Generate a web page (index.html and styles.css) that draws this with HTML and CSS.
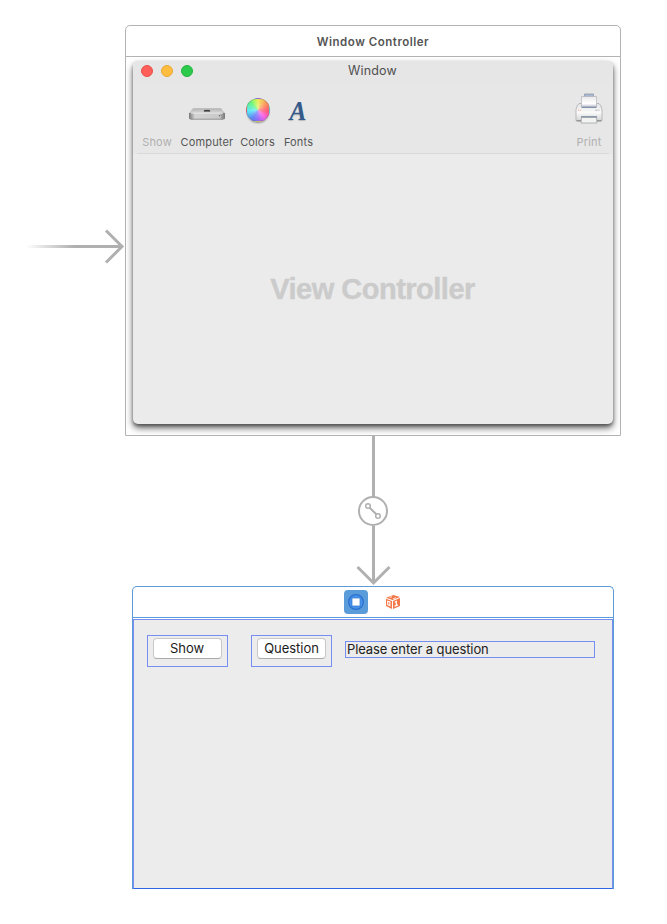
FILE: index.html
```html
<!DOCTYPE html>
<html lang="en">
<head>
<meta charset="utf-8">
<title>Storyboard</title>
<link rel="stylesheet" href="styles.css">
</head>
<body>
<main class="canvas">
  <svg class="entry" width="100" height="36" viewBox="0 0 100 36">
    <defs><linearGradient id="fade"><stop offset="0" stop-color="#b0b0b0" stop-opacity="0"/><stop offset=".5" stop-color="#b0b0b0"/></linearGradient></defs>
    <rect x="1" y="17" width="96" height="3" fill="url(#fade)"/>
    <path d="M81 2.5 97 18.5 81 34.5" fill="none" stroke="#b0b0b0" stroke-width="3"/>
  </svg>

  <section class="controller">
    <header class="controller-title"><span>Window Controller</span></header>
    <div class="window">
      <div class="titlebar">
        <div class="lights"><i class="light red"></i><i class="light yellow"></i><i class="light green"></i></div>
        <span class="window-title">Window</span>
      </div>
      <div class="toolbar">
        <div class="tool show dim"><span>Show</span></div>
        <div class="tool computer">
          <svg width="38" height="16" viewBox="0 0 38 16">
            <defs>
              <linearGradient id="top" x2="0" y2="1"><stop stop-color="#b4b4b4"/><stop offset="1" stop-color="#dadada"/></linearGradient>
              <linearGradient id="front"><stop stop-color="#777"/><stop offset=".09" stop-color="#aaa"/><stop offset=".16" stop-color="#d4d4d4"/><stop offset=".85" stop-color="#c8c8c8"/><stop offset=".92" stop-color="#999"/><stop offset="1" stop-color="#777"/></linearGradient>
            </defs>
            <path d="M5 2.500h28l3.500 5H1.500z" fill="url(#top)" stroke="#b0b0b0" stroke-width=".5"/>
            <path d="M1 7.500q0-.7 1-.7h34q1 0 1 .7v4.500q0 1.500-2 1.500H3q-2 0-2-1.500z" fill="url(#front)"/>
            <path d="M3 7.200h32" stroke="#eee" stroke-width=".8"/>
            <path d="M3 13.200h32" stroke="#858585" stroke-width=".8"/>
            <path d="M16.500 4.300h5l.5 1h-6z" fill="#222" stroke="#333" stroke-width=".5"/>
            <circle cx="31.500" cy="9.700" r=".6" fill="#555"/>
          </svg>
          <span>Computer</span>
        </div>
        <div class="tool colors"><i class="wheel"></i><span>Colors</span></div>
        <div class="tool fonts"><b class="glyph">A</b><span>Fonts</span></div>
        <div class="tool print dim">
          <svg width="28" height="31" viewBox="0 0 28 31">
            <defs><linearGradient id="paper" x2="0" y2="1"><stop stop-color="#e8e8eb"/><stop offset=".7" stop-color="#fff"/><stop offset="1" stop-color="#ccd"/></linearGradient><linearGradient id="shell" x2="0" y2="1"><stop stop-color="#e3e3e5"/><stop offset=".5" stop-color="#fafafa"/><stop offset="1" stop-color="#d0d0d0"/></linearGradient></defs>
            <path d="M9.500 1h9v3h-9z" fill="#aab9d3" stroke="#8991a0" stroke-width=".7"/>
            <path d="M4 10.500h20q2.500 2 3 6v10.500q0 1.500-2 1.500H3Q1 28.500 1 27V16.500q.5-4 3-6z" fill="url(#shell)" stroke="#a5a5a8" stroke-width=".7"/>
            <path d="M6.500 15h15v-3h-15z" fill="#8493af"/>
            <path d="M6.500 3.500h15v10h-15z" fill="url(#paper)" stroke="#b4b4b9" stroke-width=".7"/>
            <path d="M1.500 27.500h25" stroke="#989898"/>
            <path d="M6 23h16v2H6z" fill="#8c9aae"/>
            <path d="M6.500 24.500h15l.5 5.500H6z" fill="#f2f3f3" stroke="#96999d" stroke-width=".7"/>
            <path d="M3 17.200h1m1 0h1" stroke="#f4a188"/><path d="M20.500 17.200h2m1 0h1" stroke="#aaa"/>
          </svg>
          <span>Print</span>
        </div>
      </div>
      <div class="placeholder"><span>View Controller</span></div>
    </div>
  </section>

  <svg class="segue" width="40" height="151" viewBox="0 0 40 151">
    <g fill="none" stroke="#b0b0b0">
      <path d="M20.500 0V61M20.500 90V145" stroke-width="3"/>
      <path d="M4.500 131 20.500 147 36.500 131" stroke-width="3"/>
      <circle cx="20" cy="75" r="14" fill="#fff" stroke-width="2"/>
      <path d="M16.700 71.700 23.300 78.300" stroke-width="2"/>
      <circle cx="15" cy="70" r="2.300" stroke-width="1.500"/><circle cx="25" cy="80" r="2.300" stroke-width="1.500"/>
    </g>
  </svg>

  <section class="scene">
    <header class="dock">
      <span class="dock-item selected">
        <svg width="24" height="24" viewBox="0 0 24 24"><circle cx="12" cy="12" r="7.400" fill="#4a93ea" stroke="#2a70cf" stroke-width="1.200"/><path d="M8 8h8v8H8z" fill="#fff" stroke="#2d75d1" stroke-width=".7"/></svg>
      </span>
      <span class="dock-item">
        <svg width="16" height="16" viewBox="0 0 16 16"><g fill="#f47748"><path d="M1 3.700 8.500 1 15 3 7.500 6z"/><path d="M1 4.700 7 6.900V15l-6-3z"/><path d="M8 6.900 15 4v8l-7 3z"/></g><path d="M4.500 3.500 7 2.700m1 2 3-1" stroke="#fff" stroke-width=".8"/><path d="M2.700 7.300 4.900 8v3.600l-2.200-.9z" fill="none" stroke="#fff" stroke-width="1.100"/><path d="M9.800 8.300l1.500-.8v4m-1.800.8 3.500-1.400" fill="none" stroke="#fff" stroke-width="1.200"/></svg>
      </span>
    </header>
    <div class="view">
      <div class="frame"><span class="button show-button">Show</span></div>
      <div class="frame second"><span class="button">Question</span></div>
      <div class="field"><span>Please enter a question</span></div>
    </div>
  </section>
</main>
</body>
</html>
```
FILE: styles.css
```css
* { box-sizing: border-box; }
body { margin: 0; background: #fff; font-family: Inter, "Liberation Sans", sans-serif; }
.canvas { position: relative; width: 667px; height: 924px; overflow: hidden; }
span { white-space: nowrap; }
svg { display: block; }

/* canvas nodes and connections */
.entry { position: absolute; left: 25px; top: 228px; }
.segue { position: absolute; left: 353px; top: 436px; }
.controller { position: absolute; left: 125px; top: 25px; width: 496px; height: 411px; border: 1px solid #b3b3b3; border-radius: 5px 5px 0 0; }
.scene { position: absolute; left: 132px; top: 586px; width: 482px; height: 303px; border: 1px solid #5b9bd8; border-bottom: 0; border-radius: 5px 5px 0 0; }

.controller-title { height: 31px; border-bottom: 1px solid #b3b3b3; display: flex; align-items: center; justify-content: center; font-size: 11.5px; font-weight: 600; color: #555; letter-spacing: .52px; padding-top: 1px; }
.window { margin: 4px 7px 0; height: 363px; background: #ebebeb; border-radius: 5px; box-shadow: 0 4px 7px rgba(0,0,0,.6), 0 2px 3px rgba(0,0,0,.3); }
.titlebar { height: 21px; background: #e6e6e6; border-radius: 5px 5px 0 0; display: grid; grid-template-columns: 60px 1fr 61px; align-items: center; padding-bottom: 2px; }
.lights { display: flex; gap: 8px; padding-left: 8px; }
.light { width: 12px; height: 12px; flex: none; border-radius: 50%; border: 1px solid; }
.red { background: #ff5f58; border-color: #e9504a; }
.yellow { background: #ffbd3f; border-color: #e9a935; }
.green { background: #2bca4b; border-color: #22b53f; }
.window-title { text-align: center; font-size: 12.5px; color: #505050; letter-spacing: .15px; }
.toolbar { height: 72px; background: linear-gradient(#d9d9d9, #d9d9d9) center bottom / 472px 1px no-repeat, #e6e6e6; background-color: #e7e7e7; display: flex; padding: 9px 8px 0 9px; }
.tool { display: flex; flex-direction: column; align-items: center; justify-content: flex-end; font-size: 11px; line-height: 14px; color: #555; letter-spacing: .15px; padding-bottom: 5px; }
.tool span { height: 14px; }
.dim { color: #b0b0b0; }
.show { width: 30px; }
.computer { width: 54px; margin-left: 8px; }
.computer svg { margin-bottom: 13px; }
.colors { width: 35px; margin-left: 6px; }
.wheel { width: 24px; height: 24px; border-radius: 50%; margin-bottom: 13px; background: radial-gradient(circle, rgba(255,255,255,.4), rgba(255,255,255,.05) 60%), conic-gradient(#e9ed54, #ff8c55 55deg, #ff506f 95deg, #f65bea 140deg, #8c62fa 180deg, #587df5 215deg, #50eaf6 265deg, #61f47a 315deg, #9df85f 335deg, #e9ed54); border: 1px solid rgba(90,90,90,.3); box-shadow: 0 2px 2px -1px rgba(0,0,0,.4); }
.fonts { width: 31px; margin-left: 8px; }
.glyph { font: italic bold 27px/26px "Liberation Serif", serif; color: #345a8b; margin-bottom: 11px; text-shadow: 0 1px 1px rgba(0,0,0,.2); transform: scaleX(.94); }
.print { width: 32px; margin-left: auto; }
.print svg { margin-bottom: 11px; }
.placeholder { height: 270px; display: flex; align-items: center; justify-content: center; font: bold 29px/34px "Liberation Sans", sans-serif; color: #cbcbcb; letter-spacing: -.5px; -webkit-text-stroke: .4px #cbcbcb; padding-right: 1px; }

.dock { height: 31px; border-bottom: 1px solid #5b9bd8; display: flex; align-items: center; justify-content: center; gap: 13px; padding-left: 3px; }
.dock-item { width: 24px; height: 24px; display: grid; place-items: center; }
.selected { background: #5a9bd9; border-radius: 4px; }
.view { height: 270px; margin-top: 1px; background: #ececec; border: 1px solid #768ef0; border-bottom-color: #2c68e5; display: flex; align-items: flex-start; padding: 15px 0 0 13px; }
.frame { width: 81px; height: 32px; border: 1px solid #768ef0; padding: 2px 5px; }
.second { margin-left: 23px; }
.button { width: 69px; height: 21px; display: flex; justify-content: center; background: #fff; border: 1px solid #c8c8c8; border-bottom-color: #aaa; border-radius: 4px; font-size: 13px; line-height: 18px; color: #1b1b1b; letter-spacing: -.05px; }
.show-button { padding-right: 1px; }
.field { width: 250px; height: 17px; margin: 6px 0 0 13px; border: 1px solid #768ef0; padding-left: 1px; font-size: 13px; line-height: 15px; color: #222; letter-spacing: -.1px; }
```
